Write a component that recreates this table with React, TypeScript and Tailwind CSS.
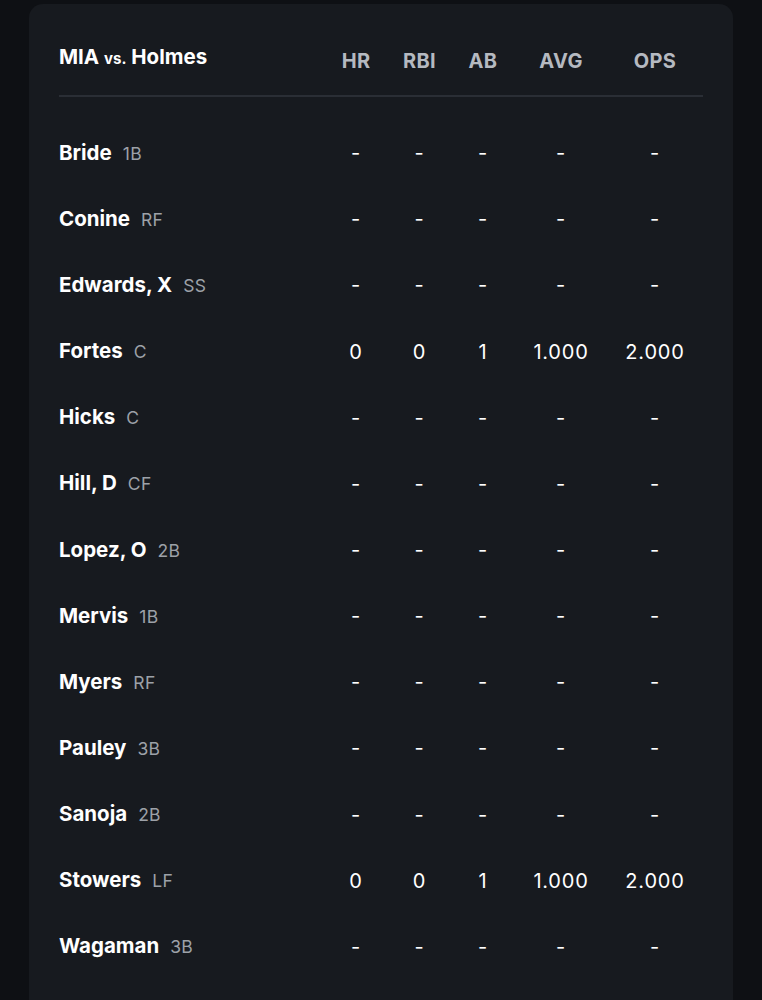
import React from 'react';

type Row = { name: string; pos: string; stats?: [string, string, string, string, string] };

const rows: Row[] = [
  { name: 'Bride', pos: '1B' },
  { name: 'Conine', pos: 'RF' },
  { name: 'Edwards, X', pos: 'SS' },
  { name: 'Fortes', pos: 'C', stats: ['0', '0', '1', '1.000', '2.000'] },
  { name: 'Hicks', pos: 'C' },
  { name: 'Hill, D', pos: 'CF' },
  { name: 'Lopez, O', pos: '2B' },
  { name: 'Mervis', pos: '1B' },
  { name: 'Myers', pos: 'RF' },
  { name: 'Pauley', pos: '3B' },
  { name: 'Sanoja', pos: '2B' },
  { name: 'Stowers', pos: 'LF', stats: ['0', '0', '1', '1.000', '2.000'] },
  { name: 'Wagaman', pos: '3B' },
];

const cols = ['HR', 'RBI', 'AB', 'AVG', 'OPS'];
const grid = 'grid grid-cols-[1fr_64px_63px_64px_92px_96px] items-center';

export default function App() {
  return (
    <div className="min-h-[1000px] bg-[#0e1014] px-[29px] pt-1 font-['Inter','Liberation_Sans',sans-serif]">
      <div className="rounded-t-[14px] bg-[#171a1f] px-[30px] pt-10 pb-8">
        <div className={`${grid} h-[26px] leading-[26px]`}>
          <div className="text-[20.5px] font-bold text-white">
            MIA <span className="text-[15px]">vs.</span> Holmes
          </div>
          {cols.map((c) => (
            <div key={c} className="translate-y-[3px] text-center text-[20px] font-bold tracking-[0.3px] text-[#b5b9c0]">
              {c}
            </div>
          ))}
        </div>
        <div className="mt-[25px] h-[2px] bg-[#2a2e35]" />
        <div className="mt-[23px]">
          {rows.map((r) => (
            <div key={r.name} className={`${grid} h-[66.17px] leading-[26px]`}>
              <div className="flex items-baseline gap-[11px]">
                <span className="text-[20.5px] font-bold text-white">{r.name}</span>
                <span className="text-[17.5px] tracking-[0.3px] text-[#9da1a8]">{r.pos}</span>
              </div>
              {(r.stats ?? ['-', '-', '-', '-', '-']).map((s, i) => (
                <div key={i} className="text-center text-[20px] tracking-[0.8px] text-white">
                  {s}
                </div>
              ))}
            </div>
          ))}
        </div>
      </div>
    </div>
  );
}
